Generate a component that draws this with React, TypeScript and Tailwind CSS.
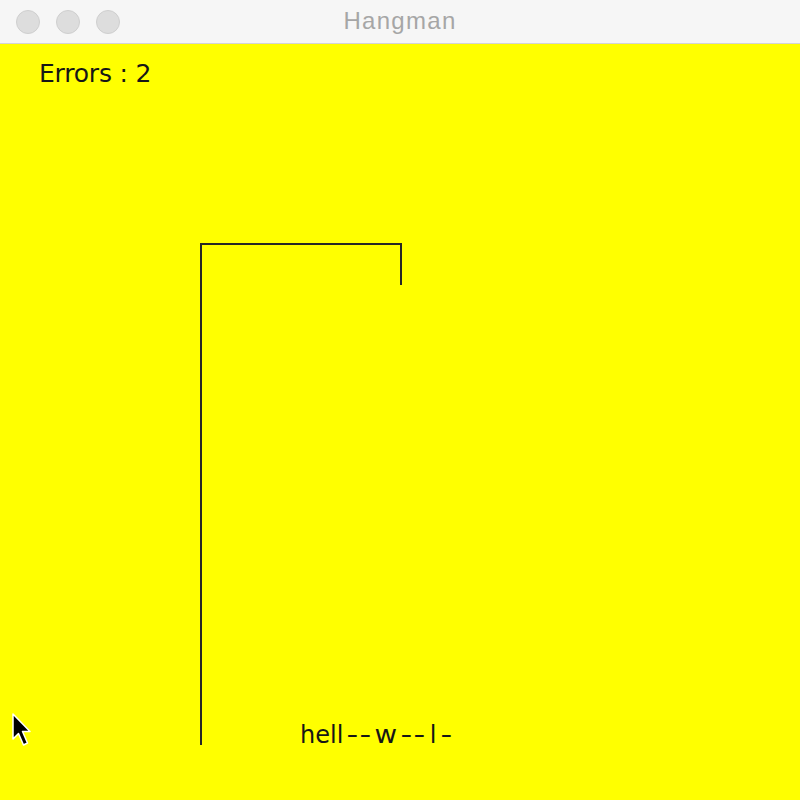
import React from "react";

function Dash() {
  return (
    <span className="inline-block w-[13.5px] text-center">
      <span className="inline-block scale-x-[1.35]">-</span>
    </span>
  );
}

export default function App() {
  return (
    <div className="w-[800px] h-[800px] flex flex-col overflow-hidden">
      <div className="h-[44px] bg-[#f6f6f6] border-b border-[#d4d4d4] flex items-center relative shrink-0">
        <div className="flex gap-[16px] pl-[16px]">
          <div className="w-[24px] h-[24px] rounded-full bg-[#dddddd] border border-[#cfcfcf]" />
          <div className="w-[24px] h-[24px] rounded-full bg-[#dddddd] border border-[#cfcfcf]" />
          <div className="w-[24px] h-[24px] rounded-full bg-[#dddddd] border border-[#cfcfcf]" />
        </div>
        <div
          className="absolute inset-0 flex items-center justify-center text-[24px] tracking-[1.3px] text-[#a6a6a6] pb-[1px]"
          style={{ fontFamily: '"Liberation Sans", Arial, sans-serif' }}
        >
          Hangman
        </div>
      </div>
      <div
        className="flex-1 bg-[#ffff00] relative text-[#161616]"
        style={{ fontFamily: '"DejaVu Sans", sans-serif' }}
      >
        <div className="absolute left-[39px] top-[17px] text-[25px] leading-none tracking-[-0.2px]">Errors : 2</div>
        <svg className="absolute inset-0" width="800" height="756" viewBox="0 44 800 756">
          <path d="M201 745 V244 H401 V285" fill="none" stroke="#262626" strokeWidth="2" />
          <path
            d="M13 714 L13 739 L18.5 733.5 L23.5 745 L27.5 743 L22.5 731.5 L30 731.5 Z"
            fill="#000"
            stroke="#fff"
            strokeWidth="1.5"
            strokeLinejoin="round"
          />
        </svg>
        <div className="absolute left-[300px] top-[679px] text-[24px] leading-none whitespace-nowrap">
          <span className="inline-block w-[45.5px]">hell</span>
          <Dash />
          <Dash />
          <span className="inline-block w-[27px] text-center">
            <span className="inline-block scale-x-[1.15]">w</span>
          </span>
          <Dash />
          <Dash />
          <span className="inline-block w-[13px] text-center">l</span>
          <Dash />
        </div>
      </div>
    </div>
  );
}
